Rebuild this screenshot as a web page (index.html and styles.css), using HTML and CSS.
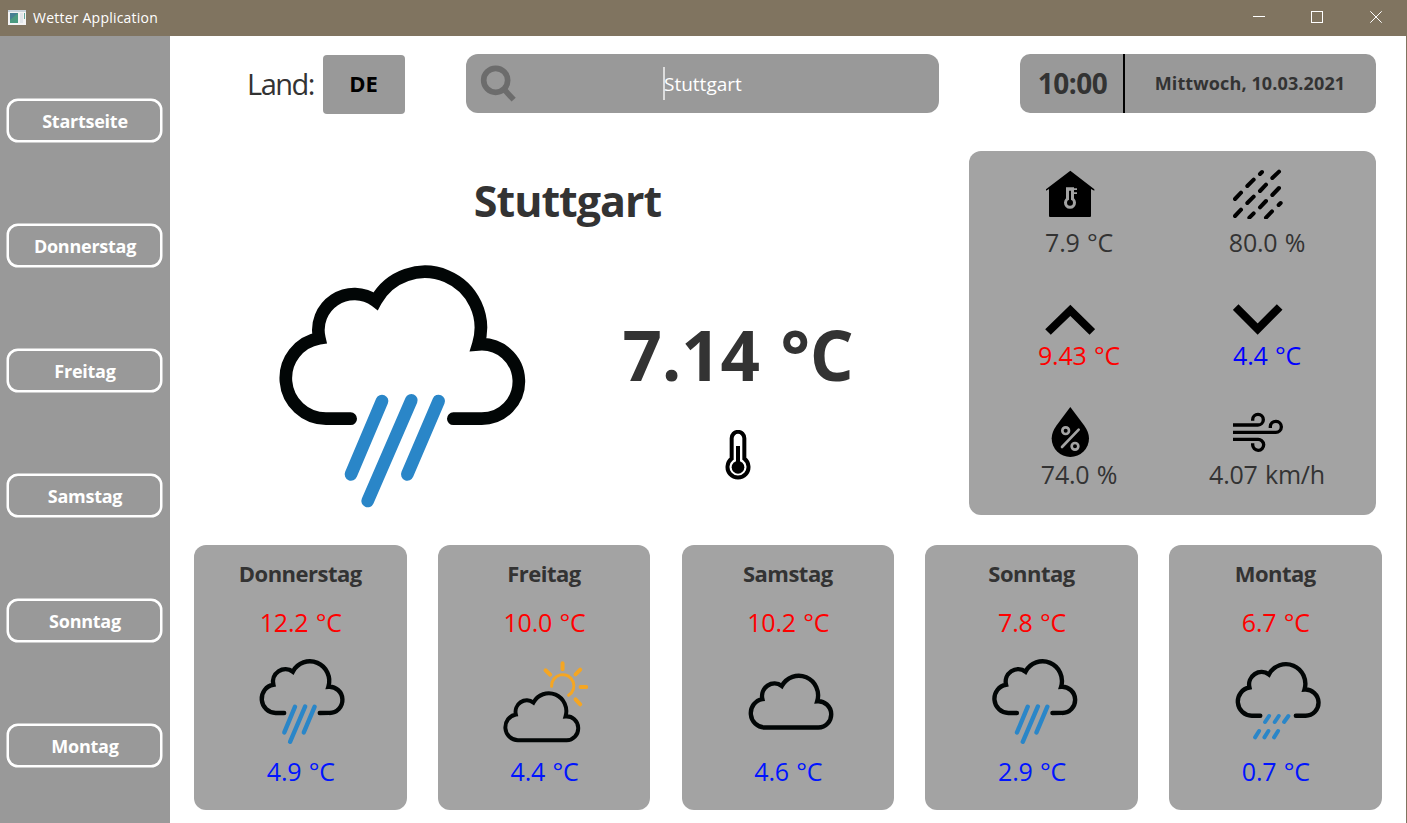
FILE: index.html
```html
<!DOCTYPE html>
<html lang="de">
<head>
<meta charset="utf-8">
<title>Wetter Application</title>
<link rel="stylesheet" href="styles.css">
</head>
<body>
<svg class="defs" width="0" height="0" aria-hidden="true">
  <defs>
    <path id="cloud-open" class="cloud" d="M272 506H198A121.400 121.400 0 0 1 178 265A108 108 0 0 1 347 153A168 168 0 0 1 655 283A111.720 111.720 0 1 1 664 506H580"/>
    <path id="cloud-closed" class="cloud" d="M198 506A121.400 121.400 0 0 1 178 265A108 108 0 0 1 347 153A168 168 0 0 1 655 283A111.720 111.720 0 1 1 664 506Z"/>
    <path id="rain" class="rain" d="M366 453L273 673M454 451L323 753M536 453L442 673"/>
  </defs>
</svg>

<header class="titlebar">
  <svg class="app-icon" width="18" height="15" viewBox="0 0 18 15">
    <rect width="18" height="15" fill="#f4f4f4"/>
    <rect width="18" height="2" fill="#c9d3dc"/>
    <rect x="2" y="3" width="8" height="10" fill="#4b9a80"/>
    <path d="M2 3H10L2 10Z" fill="#467f94"/>
    <rect x="12" y="3" width="3" height="10" fill="#e1e5ea"/>
    <rect x="16" y="3" width="1" height="6" fill="#61a79c"/>
  </svg>
  <span class="titlebar-text">Wetter Application</span>
  <div class="window-controls">
    <svg width="12" height="12" viewBox="0 0 12 12"><path d="M0 5.500H12"/></svg>
    <svg width="12" height="12" viewBox="0 0 12 12"><rect x=".5" y=".5" width="11" height="11"/></svg>
    <svg width="12" height="12" viewBox="0 0 12 12"><path d="M.3 .3L11.700 11.700M11.700 .3L.3 11.700"/></svg>
  </div>
</header>

<div class="app">
  <nav class="sidebar">
    <button class="nav-button">Startseite</button>
    <button class="nav-button">Donnerstag</button>
    <button class="nav-button">Freitag</button>
    <button class="nav-button">Samstag</button>
    <button class="nav-button">Sonntag</button>
    <button class="nav-button">Montag</button>
  </nav>

  <main class="content">
    <div class="toolbar">
      <span class="country-label">Land:</span>
      <button class="country">DE</button>
      <div class="search">
        <svg class="search-icon" width="37" height="38" viewBox="122 75 111 114"><circle cx="169" cy="121" r="36"/><path d="M195 149L223 179"/></svg>
        <span class="caret"></span><span class="search-text">Stuttgart</span>
      </div>
      <div class="clock">
        <span class="time">10:00</span>
        <span class="date">Mittwoch, 10.03.2021</span>
      </div>
    </div>

    <div class="today">
      <section class="current">
        <h1 class="city">Stuttgart</h1>
        <div class="current-row">
          <svg class="current-icon" width="290" height="270" viewBox="0 0 870 810"><use href="#cloud-open"/><use href="#rain"/></svg>
          <div class="current-temp">
            <span class="temp">7.14 °C</span>
            <svg width="26" height="50" viewBox="374 360 78 150">
              <path d="M394 446V385A18.500 19 0 0 1 432 385V446A31.500 31.500 0 1 1 394 446Z" fill="none" stroke="#000" stroke-width="12"/>
              <circle cx="413" cy="472" r="19"/><path d="M413 472V408" stroke="#000" stroke-width="12"/>
            </svg>
          </div>
        </div>
      </section>

      <section class="details">
        <div class="detail">
          <svg class="detail-icon" width="50" height="50" viewBox="255 87 150 150">
            <path d="M331 92L403 148V152L393 147V228Q393 231 390 231H270Q267 231 267 228V147L258 152V148Z"/>
            <path d="M318 142H342V145H351V150H342V157H351V162H342V175A18 18 0 1 1 318 175Z" fill="#a3a3a3"/>
            <circle cx="330" cy="188" r="9"/><path d="M330 188V152" stroke="#000" stroke-width="6"/>
          </svg>
          <span class="value">7.9 °C</span>
        </div>
        <div class="detail">
          <svg class="detail-icon" width="50" height="50" viewBox="819 87 150 150">
            <path class="drizzle" d="M900 102L906 96M937 114L957 95M862 138L881 119M900 153L918 134M825 177L843 158M937 165L957 144M862 189L881 170M900 202L918 183M956 195L962 189M825 228L843 209M868 233L881 220M918 233L936 214"/>
          </svg>
          <span class="value">80.0 %</span>
        </div>
        <div class="detail">
          <svg class="detail-icon" width="50" height="31" viewBox="255 492 150 93"><path class="chevron" d="M264 576L331 511L397 576"/></svg>
          <span class="value high">9.43 °C</span>
        </div>
        <div class="detail">
          <svg class="detail-icon" width="50" height="31" viewBox="819 492 150 93"><path class="chevron" d="M827 501L893 567L959 501"/></svg>
          <span class="value low">4.4 °C</span>
        </div>
        <div class="detail">
          <svg class="detail-icon" width="50" height="50" viewBox="255 231 150 150">
            <path d="M331 231L372 286Q387 307 387 325A56 56 0 0 1 275 325Q275 307 290 286Z"/>
            <g fill="none" stroke="#a3a3a3"><circle cx="317" cy="302" r="10" stroke-width="8"/><circle cx="345" cy="349" r="10" stroke-width="8"/><path d="M306 351L356 299" stroke-width="8" stroke-linecap="round"/></g>
          </svg>
          <span class="value">74.0 %</span>
        </div>
        <div class="detail">
          <svg class="detail-icon" width="50" height="50" viewBox="819 231 150 150">
            <path class="wind" d="M819 285H894A16 16 0 1 0 878 269V272M819 307H947A16.500 16.500 0 1 0 931 290V294M819 328H893A16.500 16.500 0 1 1 878 344V340"/>
          </svg>
          <span class="value">4.07 km/h</span>
        </div>
      </section>
    </div>

    <section class="forecast">
      <article class="card">
        <h2 class="card-day">Donnerstag</h2>
        <span class="value high">12.2 °C</span>
        <svg class="card-icon" width="100" height="100" viewBox="0 0 100 100"><g transform="translate(2.800 .7) scale(.1154 .117)"><use href="#cloud-open"/><use href="#rain"/></g></svg>
        <span class="value forecast-low">4.9 °C</span>
      </article>
      <article class="card">
        <h2 class="card-day">Freitag</h2>
        <span class="value high">10.0 °C</span>
        <svg class="card-icon" width="100" height="100" viewBox="0 0 100 100">
          <g transform="translate(-64.100 -123) scale(.33333)" fill="none" stroke="#f5a623" stroke-linecap="round">
            <path stroke-width="9" d="M365 469A33.500 33.500 0 1 1 416 496"/>
            <path stroke-width="12" d="M398 400V418M347 421L361 434M451 419L437 433M452 471H469M437 508L451 523"/>
          </g>
          <use href="#cloud-closed" transform="translate(3.300 33.300) scale(.1042 .1065)"/>
        </svg>
        <span class="value forecast-low">4.4 °C</span>
      </article>
      <article class="card">
        <h2 class="card-day">Samstag</h2>
        <span class="value high">10.2 °C</span>
        <svg class="card-icon" width="100" height="100" viewBox="0 0 100 100"><use href="#cloud-closed" transform="translate(3.900 15) scale(.115 .1175)"/></svg>
        <span class="value forecast-low">4.6 °C</span>
      </article>
      <article class="card">
        <h2 class="card-day">Sonntag</h2>
        <span class="value high">7.8 °C</span>
        <svg class="card-icon" width="100" height="100" viewBox="0 0 100 100"><g transform="translate(3.500 .7) scale(.1154 .117)"><use href="#cloud-open"/><use href="#rain"/></g></svg>
        <span class="value forecast-low">2.9 °C</span>
      </article>
      <article class="card">
        <h2 class="card-day">Montag</h2>
        <span class="value high">6.7 °C</span>
        <svg class="card-icon" width="100" height="100" viewBox="0 0 100 100">
          <use href="#cloud-open" transform="translate(3.900 3.500) scale(.1154 .117)"/>
          <path transform="translate(-75.250 -123) scale(.33333)" fill="none" stroke="#2a86c8" stroke-width="12" stroke-linecap="round" d="M358 558L346 576M387 558L375 576M416 558L403 576M328 603L316 622M356 603L344 622M385 603L373 622"/>
        </svg>
        <span class="value forecast-low">0.7 °C</span>
      </article>
    </section>
  </main>
</div>
</body>
</html>
```
FILE: styles.css
```css
* { box-sizing: border-box; }

body {
  margin: 0;
  height: 823px;
  display: flex;
  flex-direction: column;
  overflow: hidden;
  background: #fff;
  color: #333;
  font-family: "Open Sans", "Noto Sans", sans-serif;
  white-space: nowrap;
}

.defs { position: absolute; }

h1, h2 { margin: 0; }

button {
  padding: 0;
  border: 0;
  font-family: inherit;
  background: #999;
}

svg { display: block; flex: none; }

.cloud { fill: none; stroke: #020606; stroke-width: 38; stroke-linecap: round; }
.rain { fill: none; stroke: #2a86c8; stroke-width: 38; stroke-linecap: round; }

.titlebar {
  flex: none;
  height: 36px;
  padding: 0 25px 0 8px;
  display: flex;
  align-items: center;
  background: #807460;
  color: #fff;
}
.app-icon { margin-top: -2px; }
.titlebar-text { margin-left: 7px; font-size: 14px; line-height: 20px; letter-spacing: .22px; }
.window-controls {
  margin-left: auto;
  margin-top: -2px;
  display: flex;
  gap: 47px;
  fill: none;
  stroke: #fff;
}
.window-controls svg:nth-child(2) { margin-left: -1px; }

.app { flex: 1; display: flex; border-right: 1px solid #807460; }

.sidebar {
  flex: none;
  width: 170px;
  padding: 63px 8px 0 7px;
  display: flex;
  flex-direction: column;
  gap: 82px;
  background: #999;
}
.nav-button {
  height: 43px;
  padding: 1px 0 0 1px;
  border: 2px solid #fff;
  border-radius: 11px;
  box-shadow: 0 0 0 .5px #fff;
  color: #fff;
  font-size: 18px;
  font-weight: 700;
  letter-spacing: -.25px;
}

.content { flex: 1; padding: 18px 24px 0; }

.toolbar { display: flex; height: 60px; padding: 0 6px 0 53px; align-items: flex-start; }
.country-label { width: 76px; font-size: 29px; line-height: 60px; letter-spacing: -1.500px; }
.country {
  width: 82px;
  height: 59px;
  margin-top: 1px;
  padding: 0 1px 3px 0;
  border-radius: 4px;
  color: #000;
  font-size: 22px;
  font-weight: 700;
}
.search {
  width: 473px;
  height: 59px;
  margin-left: 61px;
  padding-left: 14px;
  display: flex;
  align-items: center;
  border-radius: 12px;
  background: #999;
  color: #fff;
}
.search-icon { fill: none; stroke: #6c6c6c; stroke-width: 17; }
.caret { width: 2px; height: 33px; margin-left: 146px; background: #ddd; }
.search-text { margin-left: -1px; font-size: 19px; line-height: 30px; }
.clock {
  width: 356px;
  height: 59px;
  margin-left: auto;
  display: flex;
  align-items: center;
  text-align: center;
  border-radius: 10px;
  background: #999;
  font-weight: 700;
}
.time { width: 105px; padding-left: 2px; border-right: 2px solid #000; font-size: 28px; line-height: 59px; letter-spacing: -.5px; }
.date { flex: 1; margin: -1px 1px 0 0; font-size: 18px; letter-spacing: .12px; }

.today { display: flex; height: 364px; margin-top: 37px; padding-right: 6px; justify-content: space-between; }
.current { width: 747px; }
.city { margin-top: 20px; font-size: 43px; line-height: 60px; letter-spacing: -1px; text-align: center; }
.current-row { display: flex; margin: 19px 0 0 66px; }
.current-temp { width: 376px; padding: 56px 0 0; display: flex; flex-direction: column; align-items: center; }
.temp { font-size: 69px; line-height: 96px; font-weight: 700; letter-spacing: -.2px; word-spacing: 3px; }
.current-temp svg { margin-top: 28px; }

.details {
  width: 407px;
  padding: 18px 15px 0 16px;
  display: grid;
  grid-template-columns: 188px 188px;
  grid-template-rows: 135px 103px 90px;
  border-radius: 12px;
  background: #a3a3a3;
}
.detail { display: grid; justify-items: center; align-content: start; row-gap: 5px; }
.detail:nth-child(-n+2) { row-gap: 8px; }
.detail:nth-child(n+5) { row-gap: 2px; }
.detail-icon { margin-right: 18px; }
.drizzle { fill: none; stroke: #000; stroke-width: 12; stroke-linecap: round; }
.chevron { fill: none; stroke: #000; stroke-width: 24; }
.wind { fill: none; stroke: #000; stroke-width: 10; }

.value { font-size: 25px; line-height: 30px; letter-spacing: -.2px; word-spacing: 1px; }
.high { color: #f00; }
.low { color: #00f; }
.forecast-low { color: #0014ff; }

.forecast {
  margin-top: 30px;
  display: grid;
  grid-template-columns: repeat(5, 212.500px);
  column-gap: 31.250px;
}
.card {
  height: 265px;
  padding-top: 13px;
  display: flex;
  flex-direction: column;
  align-items: center;
  border-radius: 12px;
  background: #a3a3a3;
}
.card-day { margin-bottom: 19px; font-size: 22px; line-height: 30px; letter-spacing: -.5px; }
.card .value { margin-left: 1px; }
.card-icon { margin: 16px 0 3px; }
```
